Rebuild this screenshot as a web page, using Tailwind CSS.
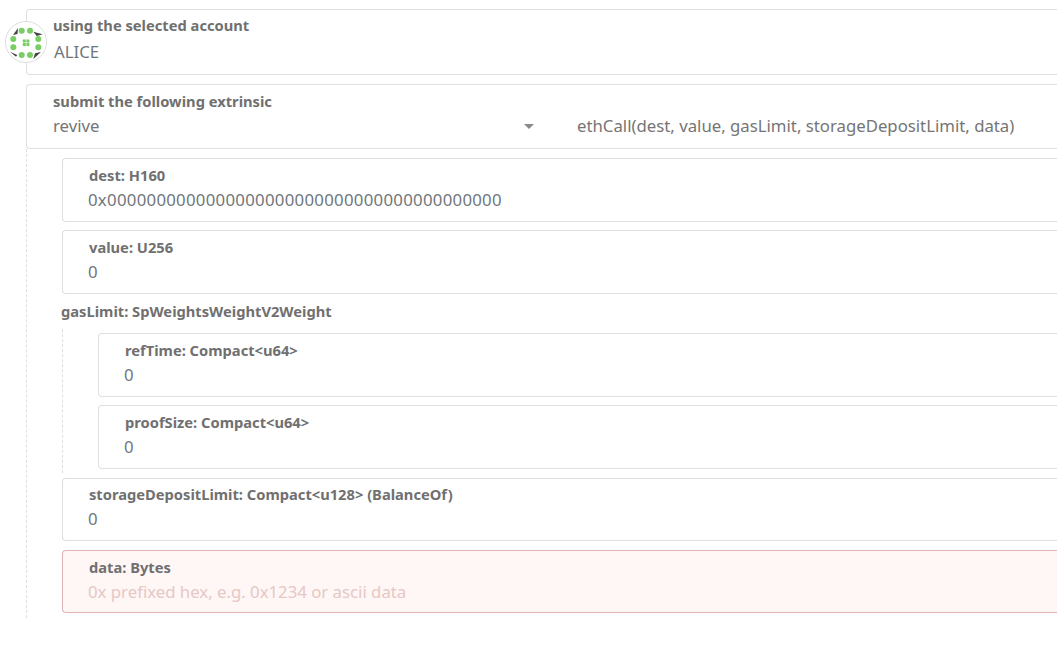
<!DOCTYPE html>
<html lang="en">
<head>
    <meta charset="UTF-8">
    <title>Extrinsic submission</title>
    <script src="https://cdn.jsdelivr.net/npm/@tailwindcss/browser@4"></script>
</head>
<body class="bg-white h-[647px] overflow-hidden font-['Noto_Sans',sans-serif] text-[#4e4e4e]">
    <div class="pt-[9px] pl-[26px] -mr-2 relative">
        <!-- account -->
        <svg class="absolute left-[5px] top-[21px] w-[42px] h-[42px]" viewBox="0 0 42 42">
            <circle cx="21" cy="21" r="20.500" fill="#fff" stroke="#ddd"/>
            <g fill="#78ce64">
                <circle cx="16.700" cy="9.700" r="3"/><circle cx="25" cy="9.700" r="3"/>
                <circle cx="8.300" cy="18" r="3"/><circle cx="33.300" cy="18" r="3"/>
                <circle cx="8.300" cy="26.300" r="3"/><circle cx="33.300" cy="26.300" r="3"/>
                <circle cx="16.700" cy="34" r="3"/><circle cx="25" cy="34" r="3"/>
                <path d="M17.800 18.500h3v3h-3z M21.400 18.500h3v3h-3z M17.800 22h3v3h-3z M21.400 22h3v3h-3z"/>
            </g>
            <path d="M13 7 L8 14 L12.500 13Z M28.300 10.700 L37.700 13.300 L31.700 15Z M5 30.700 L12.300 34 L11 35.700Z M30 32.300 L36 31 L28.300 38Z" fill="#444"/>
        </svg>
        <div class="h-[66px] border border-r-0 border-[#dfdfdf] rounded-l-[4px] pl-[26px] pt-[5px]">
            <div class="text-[14.7px] leading-[20px] font-bold text-[#707070]">using the selected account</div>
            <div class="text-[16.75px] leading-[24px] mt-[5px] pl-[1px] text-[#70777c]">ALICE</div>
        </div>

        <!-- extrinsic -->
        <div class="mt-[9px] h-[65px] border border-r-0 border-[#dfdfdf] rounded-l-[4px] pl-[26px] pt-[6px]">
            <div class="text-[14.7px] leading-[20px] font-bold text-[#707070]">submit the following extrinsic</div>
            <div class="flex text-[16.75px] leading-[24px] mt-[3px] text-[#757575]">
                <div class="w-[524px] flex items-center justify-between pr-[43px]">
                    <span>revive</span>
                    <span class="w-0 h-0 border-x-[5px] border-x-transparent border-t-[5px] border-t-[#8a8a8a]"></span>
                </div>
                <span>ethCall(dest, value, gasLimit, storageDepositLimit, data)</span>
            </div>
        </div>

        <!-- params -->
        <div class="border-l border-dashed border-[#dfdfdf] h-[469px] pl-[35px] pt-[9px] flex flex-col gap-[8px]">
            <div class="h-[64px] border border-r-0 border-[#dfdfdf] rounded-l-[4px] pl-[26px] pt-[6px]">
                <div class="text-[14.7px] leading-[20px] font-bold text-[#707070]">dest: H160</div>
                <div class="text-[16.75px] leading-[24px] mt-[3px] -ml-px tracking-[0.29px] text-[#70777c]">0x0000000000000000000000000000000000000000</div>
            </div>
            <div class="h-[64px] border border-r-0 border-[#dfdfdf] rounded-l-[4px] pl-[26px] pt-[6px]">
                <div class="text-[14.7px] leading-[20px] font-bold text-[#707070]">value: U256</div>
                <div class="text-[16.75px] leading-[24px] mt-[3px] -ml-px text-[#70777c]">0</div>
            </div>
            <div>
                <div class="text-[14.7px] leading-[20px] font-bold text-[#707070] -ml-px -mt-px">gasLimit: SpWeightsWeightV2Weight</div>
                <div class="border-l border-dashed border-[#dfdfdf] h-[144px] mt-[8px] pl-[35px] pt-[4px] flex flex-col gap-[8px]">
                    <div class="h-[64px] border border-r-0 border-[#dfdfdf] rounded-l-[4px] pl-[26px] pt-[6px]">
                        <div class="text-[14.7px] leading-[20px] font-bold text-[#707070]">refTime: Compact&lt;u64&gt;</div>
                        <div class="text-[16.75px] leading-[24px] mt-[3px] -ml-px text-[#70777c]">0</div>
                    </div>
                    <div class="h-[64px] border border-r-0 border-[#dfdfdf] rounded-l-[4px] pl-[26px] pt-[6px]">
                        <div class="text-[14.7px] leading-[20px] font-bold text-[#707070]">proofSize: Compact&lt;u64&gt;</div>
                        <div class="text-[16.75px] leading-[24px] mt-[3px] -ml-px text-[#70777c]">0</div>
                    </div>
                </div>
            </div>
            <div class="h-[63px] border border-r-0 border-[#dfdfdf] rounded-l-[4px] pl-[26px] pt-[5px] -mt-[3px]">
                <div class="text-[14.7px] leading-[20px] font-bold text-[#707070]">storageDepositLimit: Compact&lt;u128&gt; (BalanceOf)</div>
                <div class="text-[16.75px] leading-[24px] mt-[3px] -ml-px text-[#70777c]">0</div>
            </div>
            <div class="h-[63px] border border-r-0 border-[#e0b4b4] bg-[#fff6f6] rounded-l-[4px] pl-[26px] pt-[6px] mt-[1px]">
                <div class="text-[14.7px] leading-[20px] font-bold text-[#707070]">data: Bytes</div>
                <div class="text-[16.75px] leading-[24px] mt-[3px] -ml-px text-[#e6c8c4]">0x prefixed hex, e.g. 0x1234 or ascii data</div>
            </div>
        </div>
    </div>
</body>
</html>
